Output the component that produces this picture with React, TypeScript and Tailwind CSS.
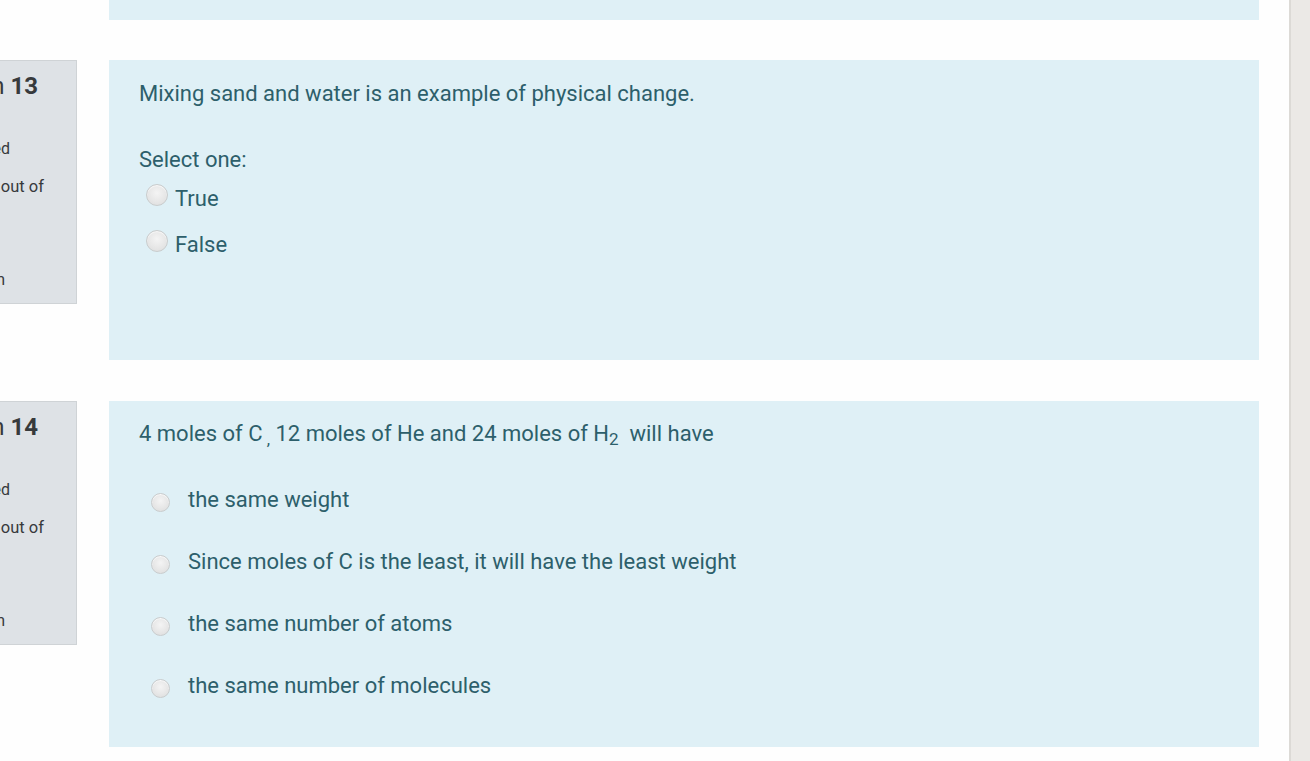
import React from 'react'

function Radio({ size, shift }: { size: 'lg' | 'sm'; shift: string }) {
  const dims = size === 'lg' ? 'w-[22px] h-[22px]' : 'w-[19px] h-[19px]'
  return (
    <span
      className={`${dims} ${shift} shrink-0 rounded-full border border-[#c9cccd] bg-[radial-gradient(circle_at_50%_40%,#f4f4f4,#dcdcdc)] shadow-[inset_0_1px_1px_rgba(255,255,255,0.8)]`}
    />
  )
}

function InfoBox({ num }: { num: number }) {
  return (
    <div className="w-[77px] h-[244px] shrink-0 bg-[#dee2e6] border border-[#cfd3d6] border-l-0 overflow-hidden text-[#373a3c]">
      <div className="flex justify-end pr-[38px] mt-[10px] whitespace-nowrap text-[24px] leading-[30px]">
        <span>
          Question <b className="font-bold">{num}</b>
        </span>
      </div>
      <div className="flex justify-end pr-[66px] mt-[36px] whitespace-nowrap text-[16px] leading-[24px]">
        <span>Not yet answered</span>
      </div>
      <div className="flex justify-end pr-[32px] mt-[14px] whitespace-nowrap text-[16.5px] leading-[24px]">
        <span>Marked out of</span>
      </div>
      <div className="flex justify-end pr-[110px] mt-[14px] whitespace-nowrap text-[16px] leading-[24px]">
        <span>1.00</span>
      </div>
      <div className="flex justify-end pr-[71px] mt-[31px] whitespace-nowrap text-[16px] leading-[24px]">
        <span>Flag question</span>
      </div>
    </div>
  )
}

const q14Options = [
  'the same weight',
  'Since moles of C is the least, it will have the least weight',
  'the same number of atoms',
  'the same number of molecules',
]

export default function App() {
  return (
    <div className="flex h-[761px] w-full overflow-hidden bg-[#fefefe] font-['Roboto','Liberation_Sans',sans-serif]">
      <main className="flex-1 flex flex-col">
        <div className="ml-[109px] w-[1150px] h-[20px] bg-[#dff0f6]" />

        {/* Question 13 */}
        <div className="flex items-start mt-[40px]">
          <InfoBox num={13} />
          <div className="ml-[32px] w-[1150px] h-[300px] bg-[#dff0f6] pt-[19px] pl-[30px] text-[#2d5f6b]">
            <p className="text-[22px] leading-[30px]">Mixing sand and water is an example of physical change.</p>
            <p className="mt-[36px] text-[22px] leading-[30px]">Select one:</p>
            <div className="flex flex-col mt-[1px]">
              {['True', 'False'].map((o) => (
                <label key={o} className="flex items-center h-[46px]">
                  <span className="ml-[7px] flex">
                    <Radio size="lg" shift="-translate-y-[4px]" />
                  </span>
                  <span className="ml-[7px] text-[22px] leading-[30px]">{o}</span>
                </label>
              ))}
            </div>
          </div>
        </div>

        {/* Question 14 */}
        <div className="flex items-start mt-[41px]">
          <InfoBox num={14} />
          <div className="ml-[32px] w-[1150px] h-[346px] bg-[#dff0f6] pt-[18px] pl-[30px] text-[#2d5f6b]">
            <p className="text-[22px] leading-[30px]">
              4 moles of C<sub className="text-[17px]"> ,</sub> 12 moles of He and 24 moles of H
              <sub className="text-[17px]">2</sub>
              {'  '}&nbsp;will have
            </p>
            <div className="mt-[20px] flex flex-col">
              {q14Options.map((o) => (
                <label key={o} className="flex items-center h-[62px]">
                  <span className="ml-[12px] flex">
                    <Radio size="sm" shift="translate-y-[2px]" />
                  </span>
                  <span className="ml-[18px] text-[22px] leading-[30px]">{o}</span>
                </label>
              ))}
            </div>
          </div>
        </div>
      </main>
      <aside className="w-[21px] shrink-0 bg-[#ebe9e6] border-l-2 border-[#dcdad6]" />
    </div>
  )
}
